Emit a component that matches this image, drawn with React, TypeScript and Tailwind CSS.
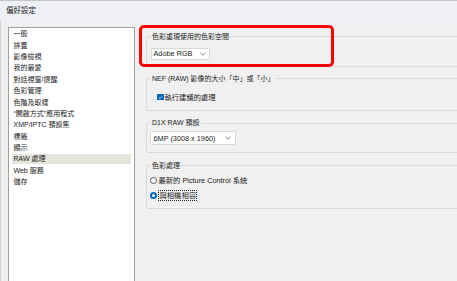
import React from "react";

const items = [
  "一般",
  "排置",
  "影像檢視",
  "我的最愛",
  "對話視窗/提醒",
  "色彩管理",
  "色階及取樣",
  "\u201C開啟方式\u201D應用程式",
  "XMP/IPTC 預設集",
  "標籤",
  "顯示",
  "RAW 處理",
  "Web 服務",
  "儲存",
];

function Chevron() {
  return (
    <svg width="6" height="4" viewBox="0 0 6 4" className="shrink-0">
      <path d="M0.5 0.8 L3 3.2 L5.5 0.8" fill="none" stroke="#5f5f5f" strokeWidth="0.8" />
    </svg>
  );
}

export default function App() {
  return (
    <div
      className="relative w-[457px] h-[281px] overflow-hidden bg-[#f0f0f0] text-[#1a1a1a]"
      style={{ fontFamily: '"Liberation Sans", "Noto Sans CJK TC", sans-serif' }}
    >
      <div className="h-[20px] border-t border-[#c4c4c4] bg-[#eff1f7] flex items-center pl-[6px] text-[7.5px] leading-none">
        偏好設定
      </div>
      <div className="flex pt-[7px] pl-[7px] border-l border-[#d4d4d4] h-[261px]">
        <div className="w-[127px] h-[270px] shrink-0 bg-white border border-[#a0a0a0] px-[3px]">
          {items.map((it) => (
            <div key={it} className="h-[11.4px] flex items-center">
              <div
                className={
                  "h-[10px] w-full flex items-center pl-[1.5px] text-[7px] leading-none whitespace-nowrap " +
                  (it === "RAW 處理" ? "bg-[#e5e5dc]" : "")
                }
              >
                {it}
              </div>
            </div>
          ))}
        </div>
        <div className="ml-[11px] mt-[4.5px] w-[330px] shrink-0 flex flex-col gap-[7.4px] text-[7.3px] leading-none">
          <fieldset className="border border-[#dadada] rounded-[2px] pl-[4px] pt-[6.5px] pb-[6px]">
            <legend className="px-[1px] h-[10px] leading-[10px] text-[7px]">色彩重現使用的色彩空間</legend>
            <div className="w-[59px] h-[11.5px] bg-white border border-[#d8d8d8] rounded-[2px] flex items-center justify-between pl-[1.5px] pr-[3.5px]">
              <span>Adobe RGB</span>
              <Chevron />
            </div>
          </fieldset>
          <fieldset className="border border-[#dadada] rounded-[2px] pl-[4px] pt-[8.3px] pb-[7.7px]">
            <legend className="px-[1px] h-[10px] leading-[10px] text-[7px]">NEF (RAW) 影像的大小「中」或「小」</legend>
            <div className="h-[10px] flex items-center ml-[6px] gap-[1px]">
              <div className="w-[6.5px] h-[6.5px] rounded-[1px] bg-[#0067c0] flex items-center justify-center">
                <svg width="5" height="5" viewBox="0 0 5 5">
                  <path d="M0.9 2.6 L2 3.6 L4.1 1.3" fill="none" stroke="#fff" strokeWidth="0.8" />
                </svg>
              </div>
              <span>執行建議的處理</span>
            </div>
          </fieldset>
          <fieldset className="border border-[#dadada] rounded-[2px] pl-[3px] pt-[3px] pb-[7px]">
            <legend className="px-[1px] ml-[1px] h-[10px] leading-[10px] text-[7px]">D1X RAW 預設</legend>
            <div className="w-[86px] h-[14px] bg-white border border-[#d8d8d8] rounded-[2px] flex items-center justify-between pl-[2.5px] pr-[4px]">
              <span>6MP (3008 x 1960)</span>
              <Chevron />
            </div>
          </fieldset>
          <fieldset className="border border-[#dadada] rounded-[2px] pl-[3px] pt-[5px] pb-[7.3px]">
            <legend className="px-[1px] ml-[1px] h-[10px] leading-[10px] text-[7px]">色彩處理</legend>
            <div className="flex flex-col gap-[5px]">
              <div className="h-[10px] flex items-center gap-[1.5px]">
                <div className="w-[7px] h-[7px] rounded-full border border-[#5c5c5c] bg-[#f8f8f8]" />
                <span>最新的 Picture Control 系統</span>
              </div>
              <div className="h-[10px] flex items-center gap-[1px]">
                <div className="w-[7px] h-[7px] rounded-full bg-[#0067c0] flex items-center justify-center">
                  <div className="w-[3px] h-[3px] rounded-full bg-white" />
                </div>
                <span className="border border-dotted border-[#222] px-[0.5px] h-[10.5px] flex items-center">與相機相容</span>
              </div>
            </div>
          </fieldset>
        </div>
      </div>
      <div className="absolute left-[139px] top-[25px] w-[195px] h-[42px] border-[3px] border-[#ff0000] rounded-[5px]" />
    </div>
  );
}
